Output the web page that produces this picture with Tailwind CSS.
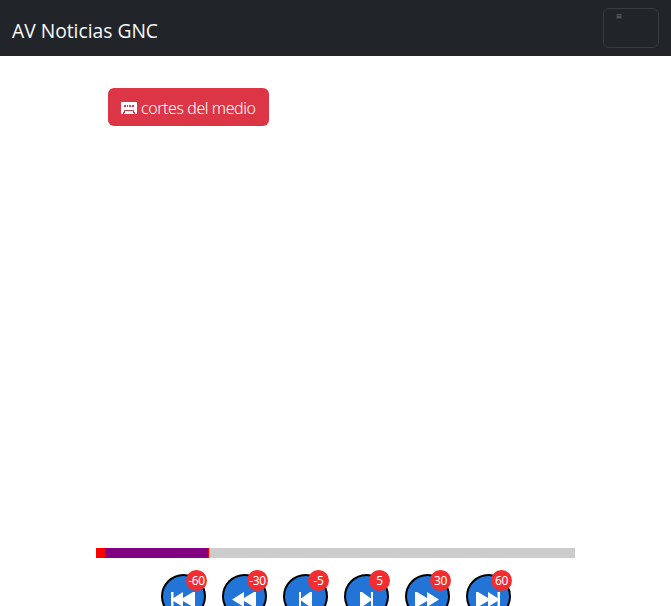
<!DOCTYPE html>
<html lang="es">
<head>
<meta charset="utf-8">
<title>AV Noticias GNC</title>
<script src="https://cdn.jsdelivr.net/npm/@tailwindcss/browser@4"></script>
</head>
<body class="h-screen overflow-hidden bg-white font-['Noto_Sans','Open_Sans',sans-serif]">
<div class="flex h-[606px] flex-col overflow-hidden">
  <nav class="flex h-14 shrink-0 items-center justify-between bg-[#212529] px-3">
    <svg class="h-[30px] w-[150px] overflow-visible text-[#f8f9fa]" fill="currentColor"><text x="0" y="25" class="text-[20px] font-['Open_Sans',sans-serif]" textLength="146" lengthAdjust="spacingAndGlyphs">AV Noticias GNC</text></svg>
    <button class="flex h-10 w-14 items-start rounded-md border border-[#373b3e] pt-[5px] pl-3" aria-label="Menú">
      <svg width="6" height="5" viewBox="0 0 6 5" shape-rendering="crispEdges"><path d="M0 0h6v5H0z" fill="#34383b"/><path d="M1 0h4v1H1zM1 2h4v2H1z" fill="#505356"/></svg>
    </button>
  </nav>
  <main class="flex min-h-0 flex-1 flex-col px-24 pt-8">
    <button class="ml-3 flex h-[38px] w-[161px] shrink-0 items-center rounded-md bg-[#dc3545] pl-[13px] text-white">
      <svg class="mt-0.5 mr-1" width="16" height="12" viewBox="0 0 16 12" fill="none" shape-rendering="crispEdges"><path fill="#fff" d="M0 0h16v12h-2v-2h-1V8H3v2H2v2H0z"/><path fill="#fff" d="M4 9h8v2h1v1H3v-1h1z"/><path fill="#dc3545" d="M3 3h2v2H3zM6 3h1v2H6zM8 3h2v2H8zM11 3h2v2h-2z"/></svg>
      <svg class="h-[24px] w-[116px] overflow-visible" fill="currentColor"><text x="0" y="19" class="text-[16px] font-light" textLength="115">cortes del medio</text></svg>
    </button>
    <div class="mt-[422px] flex h-2.5 w-[479px] shrink-0 bg-[#ccc]">
      <div class="w-[9px] bg-[red]"></div>
      <div class="w-[103px] bg-[purple]"></div>
      <div class="w-px bg-[red]"></div>
      <div class="w-px bg-[#d6a8a8]"></div>
    </div>
    <div class="mt-4 flex w-[479px] shrink-0 justify-center gap-4 text-[12px] leading-[21px] tracking-[-0.3px] text-white">
      <button class="relative flex size-[45px] shrink-0 justify-center rounded-full border-2 border-black bg-[#2275d7] pt-4">
        <svg class="shrink-0" width="24" height="15" viewBox="0 0 24 15" fill="#fff"><path d="M0 0h2.5v6L12 0v6L22 0h2v15h-2L12 9v6L2.500 9v6H0z"/></svg>
        <span class="absolute -top-1.5 left-[23.500px] size-[21px] rounded-full bg-[#f32c2f] text-center">-60</span>
      </button>
      <button class="relative flex size-[45px] shrink-0 justify-center rounded-full border-2 border-black bg-[#2275d7] pt-4">
        <svg class="shrink-0" width="24" height="15" viewBox="0 0 24 15" fill="#fff"><path d="M0 7.500 12 0v6L22 0h2v15h-2L12 9v6z"/></svg>
        <span class="absolute -top-1.5 left-[23.500px] size-[21px] rounded-full bg-[#f32c2f] text-center">-30</span>
      </button>
      <button class="relative flex size-[45px] shrink-0 justify-center rounded-full border-2 border-black bg-[#2275d7] pt-4">
        <svg class="shrink-0" width="13" height="15" viewBox="0 0 13 15" fill="#fff"><path d="M0 0h2v6.500L11 0h2v15h-2L2 8.500V15H0z"/></svg>
        <span class="absolute -top-1.5 left-[23.500px] size-[21px] rounded-full bg-[#f32c2f] text-center">-5</span>
      </button>
      <button class="relative flex size-[45px] shrink-0 justify-center rounded-full border-2 border-black bg-[#2275d7] pt-4">
        <svg class="shrink-0" width="13" height="15" viewBox="0 0 13 15" fill="#fff"><path d="M13 0h-2v6.500L2 0H0v15h2l9-6.500V15h2z"/></svg>
        <span class="absolute -top-1.5 left-[23.500px] size-[21px] rounded-full bg-[#f32c2f] text-center">5</span>
      </button>
      <button class="relative flex size-[45px] shrink-0 justify-center rounded-full border-2 border-black bg-[#2275d7] pt-4">
        <svg class="shrink-0" width="24" height="15" viewBox="0 0 24 15" fill="#fff"><path d="M24 7.500 12 0v6L2 0H0v15h2l10-6v6z"/></svg>
        <span class="absolute -top-1.5 left-[23.500px] size-[21px] rounded-full bg-[#f32c2f] text-center">30</span>
      </button>
      <button class="relative flex size-[45px] shrink-0 justify-center rounded-full border-2 border-black bg-[#2275d7] pt-4">
        <svg class="shrink-0" width="24" height="15" viewBox="0 0 24 15" fill="#fff"><path d="M24 0h-2.500v6L12 0v6L2 0H0v15h2l10-6v6l9.500-6v6H24z"/></svg>
        <span class="absolute -top-1.5 left-[23.500px] size-[21px] rounded-full bg-[#f32c2f] text-center">60</span>
      </button>
    </div>
  </main>
</div>
</body>
</html>
